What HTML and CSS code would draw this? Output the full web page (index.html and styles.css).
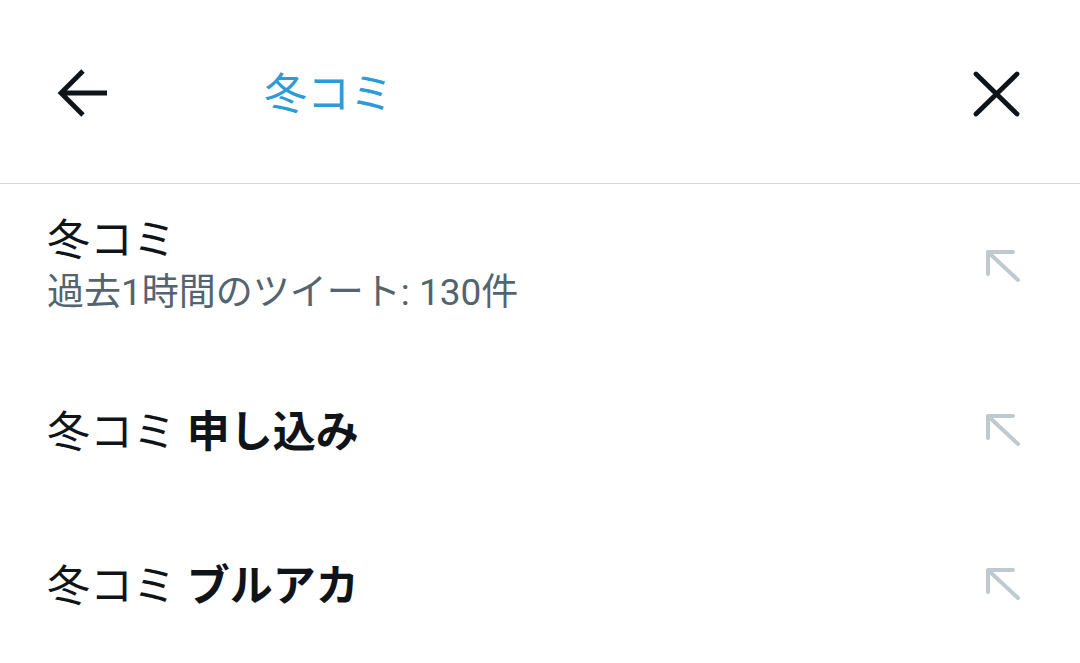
FILE: index.html
```html
<!DOCTYPE html>
<html lang="ja">
<head>
<meta charset="utf-8">
<link rel="stylesheet" href="styles.css">
</head>
<body>
<div class="screen">
  <header class="header">
    <button class="icon-btn back" aria-label="戻る">
      <svg width="50" height="50" viewBox="0 0 50 50"><path d="M4 24 H50 M26 2 L4 24 L26 46" fill="none" stroke="#0f1419" stroke-width="4.8" stroke-linecap="butt" stroke-linejoin="miter"/></svg>
    </button>
    <div class="query">冬コミ</div>
    <button class="icon-btn close" aria-label="閉じる">
      <svg width="50" height="50" viewBox="0 0 50 50"><path d="M5 5 L46 45 M46 5 L5 45" fill="none" stroke="#0f1419" stroke-width="4.8" stroke-linecap="round"/></svg>
    </button>
  </header>
  <ul class="list">
    <li class="row row-tall">
      <div class="text">
        <div class="title">冬コミ</div>
        <div class="sub">過去1時間のツイート: 130件</div>
      </div>
      <svg class="fill" width="40" height="40" viewBox="0 0 40 40"><path d="M6 5 V27 M6 5 H31 M6 5 L36 33" fill="none" stroke="#bfcad0" stroke-width="4" stroke-linecap="round" stroke-linejoin="round"/></svg>
    </li>
    <li class="row">
      <div class="text">
        <div class="title">冬コミ <b>申し込み</b></div>
      </div>
      <svg class="fill" width="40" height="40" viewBox="0 0 40 40"><path d="M6 5 V27 M6 5 H31 M6 5 L36 33" fill="none" stroke="#bfcad0" stroke-width="4" stroke-linecap="round" stroke-linejoin="round"/></svg>
    </li>
    <li class="row">
      <div class="text">
        <div class="title">冬コミ <b>ブルアカ</b></div>
      </div>
      <svg class="fill" width="40" height="40" viewBox="0 0 40 40"><path d="M6 5 V27 M6 5 H31 M6 5 L36 33" fill="none" stroke="#bfcad0" stroke-width="4" stroke-linecap="round" stroke-linejoin="round"/></svg>
    </li>
  </ul>
</div>
</body>
</html>
```
FILE: styles.css
```css
* { box-sizing: border-box; }
html, body {
  margin: 0;
  padding: 0;
  background: #ffffff;
}
body {
  font-family: Roboto, "Noto Sans CJK JP", "Noto Sans", sans-serif;
  color: #0f1419;
  width: 1080px;
  height: 663px;
  overflow: hidden;
}
.screen {
  display: flex;
  flex-direction: column;
}
.header {
  height: 184px;
  display: flex;
  align-items: center;
  padding: 4px 0 0 0;
  border-bottom: 1px solid #d6d8d9;
}
.icon-btn {
  border: 0;
  background: none;
  padding: 0;
  margin: 0;
  width: 50px;
  height: 50px;
  display: flex;
}
.back {
  margin-left: 57px;
}
.query {
  margin-left: 157px;
  font-size: 43px;
  line-height: 52px;
  color: #2c9bd6;
  flex: 1;
}
.close {
  margin-right: 59px;
}
.list {
  list-style: none;
  margin: 0;
  padding: 0;
}
.row {
  height: 154px;
  display: flex;
  align-items: center;
  justify-content: space-between;
  padding: 0 58px 0 47px;
}
.row .fill {
  margin-top: -3px;
}
.row-tall {
  height: 171px;
  padding-bottom: 8px;
}
.row-tall .fill {
  margin-top: 2px;
}
.title {
  font-size: 43px;
  line-height: 52px;
  color: #0f1419;
}
.title b {
  font-weight: 700;
}
.sub {
  font-size: 37px;
  line-height: 50px;
  margin-top: 2px;
  color: #536471;
}
```
